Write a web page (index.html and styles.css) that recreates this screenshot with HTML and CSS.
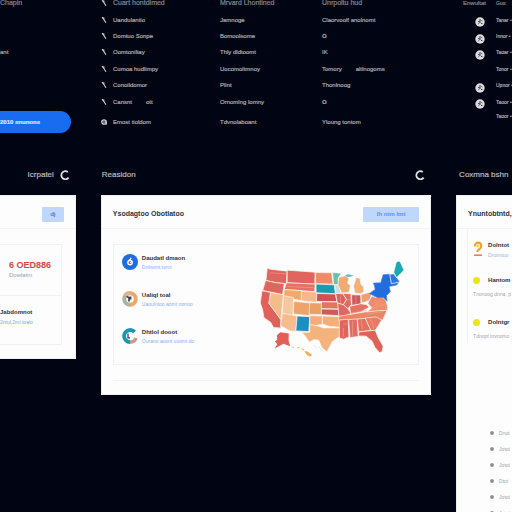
FILE: index.html
```
<!DOCTYPE html>
<html lang="en">
<head>
<meta charset="utf-8">
<title>Overview</title>
<link rel="stylesheet" href="styles.css">
</head>
<body>
<svg class="defs" aria-hidden="true">
  <symbol id="tick" viewBox="0 0 6 8"><path d="M1 1.2 3 3.6M2.6 1.4 3.2 4 5 6.8" fill="none" stroke="currentColor" stroke-width="1.1"/></symbol>
  <symbol id="ring" viewBox="0 0 10 10"><path d="M7.8 2A4 4 0 1 0 8.6 7.6" fill="none" stroke="currentColor" stroke-width="1.9"/></symbol>
  <symbol id="coin" viewBox="0 0 10 10"><circle cx="5" cy="5" r="4.7" fill="#dcdcdc"/><path d="M5 2v4M3 4.6h1.5M6 6.5h1.4M3.4 6.8l1-.8M6.4 3.4l.9.6" stroke="#222732" stroke-width=".9"/></symbol>
</svg>
<header class="top">
  <div class="col">
    <ul class="rows">
      <li class="head">Chapin</li><li></li><li></li><li>ant</li><li></li><li></li><li></li>
    </ul>
    <button class="pill" type="button">2010 snunons</button>
  </div>
  <div class="col">
    <ul class="rows">
      <li class="head"><svg class="tick"><use href="#tick"/></svg>Cuart hontdimed</li>
      <li><svg class="tick"><use href="#tick"/></svg>Uandulantio</li>
      <li><svg class="tick"><use href="#tick"/></svg>Domtuo Sonpe</li>
      <li><svg class="tick"><use href="#tick"/></svg>Oomtoniliay</li>
      <li><svg class="tick"><use href="#tick"/></svg>Cumoa hudlimpy</li>
      <li><svg class="tick"><use href="#tick"/></svg>Conoildomor</li>
      <li><svg class="tick"><use href="#tick"/></svg>Cansnt <span class="aside">ott</span></li>
    </ul>
    <p class="last"><svg class="tick" viewBox="0 0 6 8"><circle cx="3" cy="4" r="2.2" fill="none" stroke="currentColor" stroke-width="1.3"/><path d="M2 4h3.4v2.6" fill="none" stroke="currentColor"/></svg>Emost tioldom</p>
  </div>
  <div class="col">
    <ul class="rows">
      <li class="head">Mrvard Lhontined</li><li>Jamnoge</li><li>Bomoolsome</li><li>Thly dldtoomt</li><li>Uocomoltmnoy</li><li>Plint</li><li>Ornomlng lomny</li>
    </ul>
    <p class="last">Tdvnolaboant</p>
  </div>
  <div class="col">
    <ul class="rows">
      <li class="head">Unrpoltu hud</li><li>Claorvoolf anolnomt</li><li><b>O</b></li><li>IK</li><li>Tomory <span class="aside">altlnogoms</span></li><li>Thonlnoog</li><li><b>O</b></li>
    </ul>
    <p class="last">Yloung tontom</p>
  </div>
  <div class="col">
    <ul class="rows coins">
      <li class="head">Enwultat</li>
      <li><svg><use href="#coin"/></svg></li><li><svg><use href="#coin"/></svg></li><li><svg><use href="#coin"/></svg></li><li></li><li><svg><use href="#coin"/></svg></li><li><svg><use href="#coin"/></svg></li>
    </ul>
  </div>
  <div class="col narrow">
    <ul class="rows">
      <li class="head">Gus:</li><li>Tanar •</li><li>Innor •</li><li>Taoar •</li><li>Tonor •</li><li>Upnor •</li><li>Taoor •</li>
    </ul>
    <p class="early">Taoor •</p>
  </div>
</header>

<main class="board">
  <section class="left">
    <div class="title"><h2>Icrpatei</h2><svg class="ring"><use href="#ring"/></svg></div>
    <div class="card">
      <div class="bar"><button class="soft small" type="button">dj</button></div>
      <div class="panel open">
        <div class="stat"><strong>6 OED886</strong><small>Dowlatm</small></div>
        <div class="note"><b>Jabdomnot</b><a href="#">2ntul,2mt toalo</a></div>
      </div>
    </div>
  </section>

  <section class="middle">
    <div class="title"><h2>Reasidon</h2><svg class="ring"><use href="#ring"/></svg></div>
    <div class="card">
      <div class="bar"><h3>Ysodagtoo Obotlatoo</h3><button class="soft" type="button">Ih ntm Imt</button></div>
      <div class="panel split">
        <ul class="people">
          <li>
            <svg viewBox="0 0 16 16"><circle cx="8" cy="8" r="8" fill="#1b6fe0"/><circle cx="8" cy="8.6" r="2.2" fill="none" stroke="#fff" stroke-width="1.4"/><path d="M6.2 7.6 9.2 4M8 9l2.5-2" stroke="#fff" stroke-width="1.2"/></svg>
            <div><b>Daudatl dmaon</b><a href="#">Dnlnomt tomt</a></div>
          </li>
          <li>
            <svg viewBox="0 0 16 16"><path d="M8 2.2A5.8 5.8 0 0 1 8 13.8" fill="none" stroke="#efa765" stroke-width="4"/><path d="M8 13.8A5.8 5.8 0 0 1 8 2.2" fill="none" stroke="#a8b6a0" stroke-width="4"/><path d="M3 4.8A5.8 5.8 0 0 1 9 2.2" fill="none" stroke="#e8b184" stroke-width="4"/><path d="M4.6 5.4 7 6.6v4M8.6 5.6v3" fill="none" stroke="#39434f" stroke-width="1.7"/></svg>
            <div><b>Ualiql toal</b><a href="#">Uaoulntoo aomt nomto</a></div>
          </li>
          <li>
            <svg viewBox="0 0 16 16"><path d="M12.6 4A6 6 0 1 0 8 14" fill="none" stroke="#1599b4" stroke-width="3.8"/><path d="M8 14a6 6 0 0 0 6-4" fill="none" stroke="#c99c89" stroke-width="3.6"/><path d="M6 5.6v4.2h2" fill="none" stroke="#333d4b" stroke-width="1.2"/></svg>
            <div><b>Dhtlol dooot</b><a href="#">Ourano aoont voomt do</a></div>
          </li>
        </ul>
        <svg class="map" viewBox="30 60 440 300" role="img" aria-label="Map of states">
          <g stroke="#fbf3ec" stroke-width="2.2" stroke-linejoin="round">
            <path fill="#e1655f" d="M52 83l8 4 52 6-3 38-30-3-31-7z"/>
            <path fill="#e1655f" d="M47 121l32 7 24 2-5 34-60-13z"/>
            <path fill="#e0605c" d="M36 152l26 5-5 33 36 49-1 25-21-1-9-16-20-14-4-24-7-20z"/>
            <path fill="#f4bb8b" d="M62 157l39 7-8 75-36-49z"/>
            <path fill="#e1655f" d="M112 90l84 6-1 36-83-4z"/>
            <path fill="#e96f62" d="M110 128l86 4-1 23-38-3-54-4z"/>
            <path fill="#f4a967" d="M103 148l54 4-2 30-54-11z"/>
            <path fill="#f6b889" d="M155 153l46 3-1 31-46-5z"/>
            <path fill="#f8c79b" d="M101 167l30 5-2 58-32-8z"/>
            <path fill="#efa269" d="M132 184l49 5-2 38-48-5z"/>
            <path fill="#f6bc8e" d="M97 220l45 8-4 46-18-1-28-16z"/>
            <path fill="#198fc3" d="M142 228l38 2-3 45-39-2z"/>
            <path fill="#f08b68" d="M197 97l49 1 4 34-52-1z"/>
            <path fill="#169dae" d="M199 132l55 2 3 27-58-3z"/>
            <path fill="#cf5156" d="M201 160l56 2 5 23-62-1z"/>
            <path fill="#ee9e69" d="M180 188l35 1v35l-37-1z"/>
            <path fill="#e27561" d="M215 185l49 1 3 21-52-1z"/>
            <path fill="#d55858" d="M215 207l52 1 1 19-53-3z"/>
            <path fill="#f5ad79" d="M180 227l38 1v25l-38 7zM218 228l51 2 2 32-33-3-20-7z"/>
            <path fill="#f4b27d" d="M180 254l28 5 12 5 50 0 1 25-23 16-9 17-7 14-15-12-10-23-15-2-13 8-15-22-9-7 25-1z"/>
            <path fill="#67bfae" d="M249 97l25 2-9 17 2 18-15-1z"/>
            <path fill="#c6e0e8" d="M255 134l13 0 7 25-17 1z"/>
            <path fill="#64bcc3" stroke="none" d="M285 106l10-4 17 4-7 3-17 4z"/>
            <path fill="#f0aa72" d="M267 112l20-5 11 8-4 14 8 8-4 20-22 2-11-25z"/>
            <path fill="#f2b17b" d="M320 112l12 3 2 18 8 7 1 15-9 6-18-2-4-21z"/>
            <path fill="#df605d" d="M258 160l22 1 10 17-9 17-18-7z"/>
            <path fill="#e16b61" d="M279 160l25 1 1 34-10 11-14-12 10-16z"/>
            <path fill="#ce595b" d="M306 164l28 1 0 27-27 4z"/>
            <path fill="#f0a06f" d="M334 164l25-7 8 4-7 20-23 8z"/>
            <path fill="#de6761" d="M264 189l17 5 15 14 8 11-5 9-31 4z"/>
            <path fill="#e57365" d="M300 199l34-8 17 3 8 8-26 14-30 6z"/>
            <path fill="#e98465" d="M267 229l91-15 30-4 25 1-13 29-26 1-106 3z"/>
            <path fill="#ee8d6c" d="M355 190l12-22 14 5 16-3 12 10 5 18 0 13-27 1-35 4 15-12z"/>
            <path fill="#e06560" d="M269 240l27-2 2 53-16 7-13-4z"/>
            <path fill="#df6d63" d="M297 239l26-2 3 53-25 3z"/>
            <path fill="#e5705f" d="M323 237l25-2 17 37-38 4z"/>
            <path fill="#e97a64" d="M347 234l33-3 17 9-20 32-13 0z"/>
            <path fill="#df6159" d="M328 276l49-5 10 24 14 24-3 17-8 2-14-16-8-18-18-15-23-1z"/>
            <path fill="#e45e59" stroke="none" d="M81 286l10-9 26 4-1 21 5 17-20-7-27 14 8-13-7-8 7-5z"/>
            <path fill="#216ddd" stroke="#3f8ceb" d="M372 129l22-1 7-24 20-2 4 27 23-2-7 8-22 4 4 16-12 11 2 17-12-11-17 1-24-13 17-12-1-7z"/>
            <path fill="#2d75e3" d="M421 102l12-1 19 24-26 6z"/>
            <path fill="#16aab2" d="M433 96l8-31 8-3 5 6 10 22-14 14-8 9z"/>
          </g>
          <path d="M61 98l47 3M112 139l82 4M273 166v30M290 178l15 2M319 166v28M280 252h18M309 242v47M335 238l4 31M363 234l10 31M348 224l55-10M362 211l26-14 21-3M366 205l28-24M292 222l60-11M281 264v27" fill="none" stroke="#f4aa91" stroke-width="1.6"/>
          <path d="M127 319l6 3-4 3zM141 321l7 1-2 5zM155 325l9 3-5 4zM163 334l9 0 15 11-5 5-8-2z" fill="#e9b45d"/>
          <path d="M193 315l8 11M205 319l14 14" stroke="#d5dbe2" stroke-width="2"/>
        </svg>
      </div>
      <hr>
    </div>
  </section>

  <section class="right">
    <div class="title"><h2>Coxmna bshn</h2></div>
    <div class="card">
      <div class="bar"><h3>Ynuntobtntd,</h3></div>
      <div class="feed">
        <div class="lead">
          <svg viewBox="0 0 10 16"><path d="M2 5.4C2 0 8.6.6 8.2 5.2 8 8.4 5 8 4 11" fill="none" stroke="#f0a12e" stroke-width="2.2"/><circle cx="5" cy="5" r="1.5" fill="#f7cf83"/><path d="M1 14.2h8" stroke="#d98468" stroke-width="1.6"/></svg>
          <div><b>Dolntot</b><a href="#">Dnomtuo</a></div>
        </div>
        <div class="entry"><b><i class="dot"></i>Hantom</b><span>Tnonoog dnna, p</span></div>
        <div class="entry"><b><i class="dot"></i>Dolntgr</b><span>Tdnopt tnvnomo</span></div>
      </div>
      <ul class="bullets"><li>Dnot</li><li>Jotot</li><li>Jotot</li><li>Dtot</li><li>Jotot</li><li>Jotot</li></ul>
    </div>
  </section>
</main>
</body>
</html>
```
FILE: styles.css
```
* { box-sizing: border-box; }
body {
  margin: 0;
  height: 100vh;
  overflow: hidden;
  background: #010412;
  color: #a9abb0;
  font: 6px/8px "Liberation Sans", Arial, sans-serif;
  white-space: nowrap;
}
h2, h3, p, ul { margin: 0; padding: 0; }
ul { list-style: none; }
a { color: #76a9ee; text-decoration: none; }
button { border: 0; padding: 0; font: inherit; font-weight: bold; }
.defs { position: absolute; width: 0; height: 0; }

.top {
  display: grid;
  grid-template-columns: 101fr 119fr 102fr 141fr 33fr 16fr;
  margin-top: -5px;
}
.col { min-width: 0; -webkit-text-stroke: 0.2px currentColor; }
.rows { display: grid; grid-auto-rows: 1fr; height: 115px; }
.rows li, .last { display: flex; align-items: center; }
.rows .head { font-size: 7px; color: #85878f; }
.last { height: 24px; }
.narrow, .narrow .rows .head { font-size: 5px; }
.early { padding-top: 2px; }
.tick { width: 6px; height: 8px; margin-right: 6px; color: #d0d1d4; }
.aside { margin-left: 14px; }
.coins li { justify-content: center; padding-top: 5px; }
.coins .head { justify-content: flex-start; padding-top: 0; font-size: 6px; }
.coins svg { width: 10px; height: 10px; }
.pill {
  width: 70%;
  height: 22px;
  margin-top: 1px;
  border-radius: 0 11px 11px 0;
  background: #196bf0;
  color: #dbe8ff;
  text-align: left;
}

.board {
  display: grid;
  grid-template-columns: 76fr 331fr 56fr;
  column-gap: 25px;
  align-items: start;
}
.board > section { min-width: 0; }
.title {
  display: flex;
  align-items: center;
  justify-content: space-between;
  height: 61px;
  padding-top: 21px;
}
.title h2 { font-size: 8px; line-height: 10px; font-weight: normal; color: #b9babd; -webkit-text-stroke: 0.2px currentColor; }
.left .title { justify-content: flex-end; gap: 6px; padding-right: 6px; }
.middle .title { padding: 21px 6px 0 1px; }
.right .title { padding-left: 3px; }
.ring { width: 10px; height: 10px; color: #dedede; }

.card { background: #fdfdfd; color: #2e3137; border: 1px solid #eceef2; }
.bar {
  display: flex;
  align-items: center;
  justify-content: space-between;
  height: 33px;
  padding: 4px 11px 0;
  border-bottom: 1px solid #f3f3f5;
}
.bar h3 { font-size: 7px; line-height: 8px; }
.soft { width: 56px; height: 15px; background: #bfd7fb; color: #5f93ea; border-radius: 1px; }
.small { width: 22px; color: #3f7de8; }
.left .card { border-left: 0; padding-bottom: 13px; }
.left .bar { justify-content: flex-end; }
.panel { margin: 15px 11px 0; border: 1px solid #f1f1f3; }
.panel b, .panel a, .panel small, .panel strong { display: block; }
.open { margin: 15px 13px 0 0; border-left: 0; }
.stat { height: 51px; padding: 14px 0 0 9px; border-bottom: 1px solid #f1f1f3; }
.stat strong { font-size: 9px; line-height: 12px; color: #d8483f; }
.stat small { font-size: 6px; color: #999da4; }
.note { height: 48px; padding-top: 12px; }
.note a { padding-top: 2px; font-size: 5px; }

.split { display: flex; justify-content: space-between; padding: 9px 12px 4px 8px; }
.people { display: grid; gap: 20px; align-content: start; }
.people li { display: flex; gap: 4px; }
.people svg { width: 16px; height: 16px; }
.people a { padding-top: 1px; color: #87b1ef; font-size: 5px; }
.map { width: 146px; height: 100px; margin-top: 6px; }
.middle hr { height: 1px; margin: 15px 11px 13px; border: 0; background: #f2f2f4; }

.right .card { height: calc(100vh - 190px); overflow: hidden; border-right: 0; }
.feed { margin-left: 10px; border-left: 1px solid #f3f3f5; padding: 12px 0 0 5px; }
.lead { display: flex; gap: 5px; }
.lead svg { flex: none; width: 10px; height: 16px; }
.lead b, .lead a, .entry span { display: block; }
.lead a { padding-top: 2px; font-size: 5px; color: #9cb6dc; }
.entry { height: 42px; padding-top: 17px; }
.entry b { display: flex; align-items: center; gap: 8px; }
.entry span { padding-top: 6px; color: #a2a5aa; font-size: 5px; }
.dot { flex: none; width: 7px; height: 7px; border-radius: 50%; background: #e9e51f; }
.bullets { padding: 82px 0 0 33px; }
.bullets li { display: flex; align-items: center; gap: 5px; height: 16px; color: #a0a4a9; font-size: 5px; }
.bullets li::before { content: ""; flex: none; width: 4px; height: 4px; border-radius: 50%; background: #8b9296; }
```
